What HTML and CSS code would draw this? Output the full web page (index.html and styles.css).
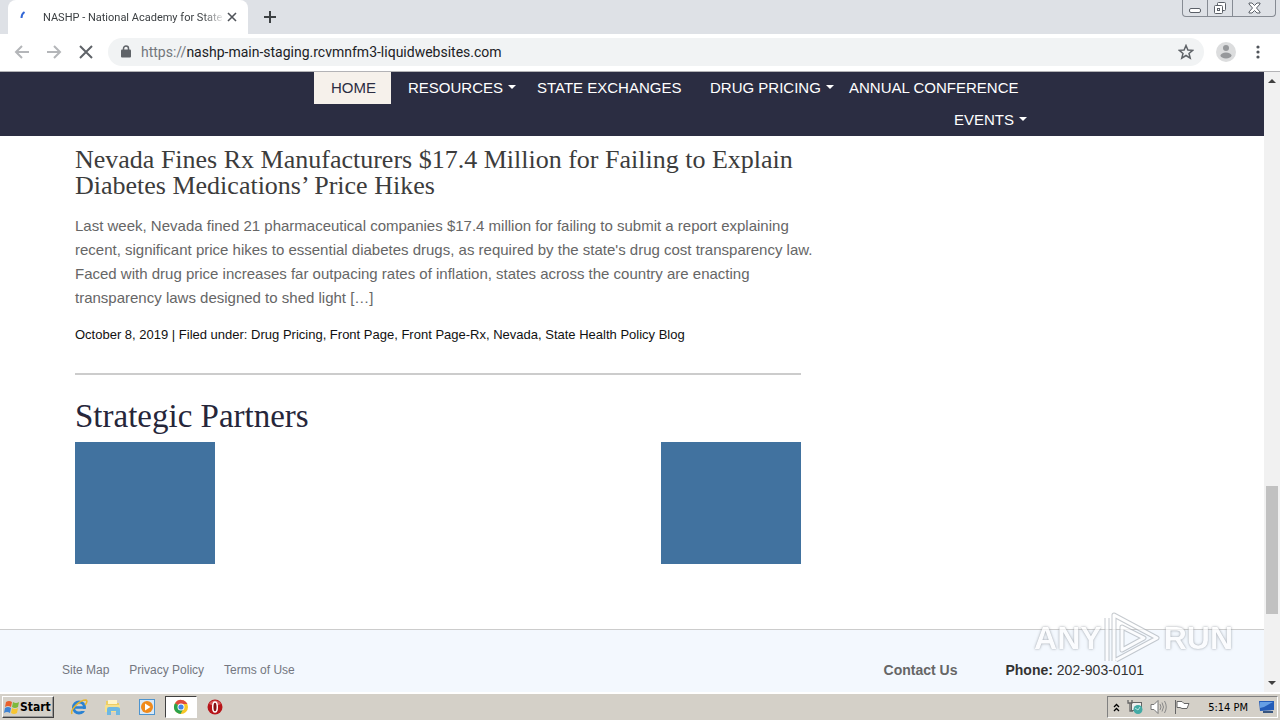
FILE: index.html
```html
<!DOCTYPE html>
<html lang="en">
<head>
<meta charset="utf-8">
<title>NASHP - National Academy for State Health Policy</title>
<link rel="stylesheet" href="styles.css">
</head>
<body>
<header class="browser">
  <div class="tabstrip">
    <div class="tab">
      <svg class="spinner" width="16" height="16" viewBox="0 0 16 16"><path d="M2.500 9Q2.500 5 5.500 3" fill="none" stroke="#3367d6" stroke-width="2"/></svg>
      <span class="tab-title">NASHP - National Academy for State</span>
      <button class="icon-btn" aria-label="Close tab"><svg width="10" height="10" viewBox="0 0 10 10"><path d="M1 1L9 9M9 1L1 9" stroke="#50545a" stroke-width="1.600"/></svg></button>
    </div>
    <button class="icon-btn new-tab" aria-label="New tab"><svg width="12" height="12" viewBox="0 0 12 12"><path d="M6 0V12M0 6H12" stroke="#3c4043" stroke-width="2"/></svg></button>
    <div class="window-controls">
      <button aria-label="Minimize"><svg width="12" height="10" viewBox="0 0 12 10"><rect x=".5" y="5.500" width="11" height="4" rx="1.500" fill="#fff" stroke="#5b6068"/></svg></button>
      <button aria-label="Restore"><svg width="14" height="14" viewBox="0 0 14 14"><rect x="4.500" y="1.500" width="8" height="8" rx="1" fill="#fff" stroke="#5b6068"/><rect x="1.500" y="4.500" width="8" height="8" rx="1" fill="#fff" stroke="#5b6068"/><rect x="4.500" y="7.500" width="2" height="2" fill="none" stroke="#5b6068"/></svg></button>
      <button class="wide" aria-label="Close"><svg width="13" height="12" viewBox="0 0 13 12"><path d="M1 1H4L6.500 3.500L9 1H12V2L8.500 6L12 10V11H9L6.500 8.500L4 11H1V10L4.500 6L1 2Z" fill="#fff" stroke="#5b6068"/></svg></button>
    </div>
  </div>
  <div class="toolbar">
    <button class="icon-btn" aria-label="Back"><svg width="16" height="16" viewBox="0 0 16 16"><path d="M15 8H2M8 2L2 8L8 14" fill="none" stroke="#b4b6b9" stroke-width="2"/></svg></button>
    <button class="icon-btn" aria-label="Forward"><svg width="16" height="16" viewBox="0 0 16 16"><path d="M1 8H14M8 2L14 8L8 14" fill="none" stroke="#b4b6b9" stroke-width="2"/></svg></button>
    <button class="icon-btn" aria-label="Stop loading"><svg width="16" height="16" viewBox="0 0 16 16"><path d="M2 2L14 14M14 2L2 14" stroke="#5f6368" stroke-width="2"/></svg></button>
    <div class="omnibox">
      <svg class="lock" width="10" height="13" viewBox="0 0 10 13"><rect y="4.500" width="10" height="8" rx="1" fill="#5f6368"/><path d="M2.500 5V3.500a2.500 2.500 0 0 1 5 0V5" fill="none" stroke="#5f6368" stroke-width="1.500"/></svg>
      <label class="scheme" for="url">https://</label>
      <input class="url" id="url" type="text" value="nashp-main-staging.rcvmnfm3-liquidwebsites.com">
      <button class="icon-btn" aria-label="Bookmark"><svg width="16" height="16" viewBox="0 0 16 16"><path d="M8 1.500L9.900 6L14.700 6.300L11 9.400L12.200 14.100L8 11.500L3.800 14.100L5 9.400L1.300 6.300L6.100 6Z" fill="none" stroke="#5f6368" stroke-width="1.500"/></svg></button>
    </div>
    <button class="icon-btn profile" aria-label="Profile"><svg width="20" height="20" viewBox="0 0 20 20"><circle cx="10" cy="10" r="10" fill="#dcddde"/><circle cx="10" cy="6" r="3" fill="#96989b"/><ellipse cx="10" cy="13.500" rx="5.500" ry="3" fill="#96989b"/></svg></button>
    <button class="icon-btn" aria-label="Menu"><svg width="4" height="14" viewBox="0 0 4 14" fill="#50545a"><circle cx="2" cy="2" r="1.600"/><circle cx="2" cy="7" r="1.600"/><circle cx="2" cy="12" r="1.600"/></svg></button>
  </div>
</header>

<div class="viewport">
  <div class="page">
    <nav class="site-nav">
      <a class="active" href="#">HOME</a>
      <a href="#">RESOURCES<i class="caret"></i></a>
      <a href="#">STATE EXCHANGES</a>
      <a href="#">DRUG PRICING<i class="caret"></i></a>
      <a href="#">ANNUAL CONFERENCE</a>
      <a class="events" href="#">EVENTS<i class="caret"></i></a>
    </nav>
    <main class="content">
      <article class="post">
        <h2>Nevada Fines Rx Manufacturers $17.4 Million for Failing to Explain Diabetes Medications’ Price Hikes</h2>
        <p class="excerpt">Last week, Nevada fined 21 pharmaceutical companies $17.4 million for failing to submit a report explaining<br>recent, significant price hikes to essential diabetes drugs, as required by the state's drug cost transparency law.<br>Faced with drug price increases far outpacing rates of inflation, states across the country are enacting<br>transparency laws designed to shed light […]</p>
        <p class="meta">October 8, 2019 | Filed under: <a href="#">Drug Pricing</a>, <a href="#">Front Page</a>, <a href="#">Front Page-Rx</a>, <a href="#">Nevada</a>, <a href="#">State Health Policy Blog</a></p>
      </article>
      <section class="partners">
        <h1>Strategic Partners</h1>
        <div class="partner-row">
          <div class="partner"></div>
          <div class="partner"></div>
        </div>
      </section>
    </main>
    <footer class="site-footer">
      <div class="footer-links">
        <a href="#">Site Map</a>
        <a href="#">Privacy Policy</a>
        <a href="#">Terms of Use</a>
      </div>
      <div class="contact">
        <a href="#">Contact Us</a>
        <span><b>Phone:</b> 202-903-0101</span>
      </div>
    </footer>
  </div>
  <div class="scrollbar">
    <svg width="8" height="4" viewBox="0 0 8 4"><path d="M0 4L4 0L8 4Z" fill="#404040"/></svg>
    <div class="track"><div class="thumb"></div></div>
    <svg width="8" height="4" viewBox="0 0 8 4"><path d="M0 0L4 4L8 0Z" fill="#404040"/></svg>
  </div>
  <div class="watermark">
    <span>ANY</span>
    <svg width="58" height="56" viewBox="0 0 58 56" fill="none" stroke-linejoin="round"><path d="M3 51V8M10 51V5L53 28L12 50M18 40V17L40 28Z" stroke="#aeb4bb" stroke-width="5"/><path d="M3 51V8M10 51V5L53 28L12 50M18 40V17L40 28Z" stroke="#fff" stroke-width="3"/></svg>
    <span>RUN</span>
  </div>
</div>

<footer class="taskbar">
  <button class="start"><svg width="16" height="16" viewBox="0 0 16 16"><path d="M2 3Q5 1 8 3L7 8Q4 6 1 8Z" fill="#e8602c"/><path d="M9 3Q12 5 15 3L14 8Q11 10 8 8Z" fill="#7db93c"/><path d="M1 9Q4 7 7 9L6 14Q3 12 0 14Z" fill="#3f83d3"/><path d="M8 9Q11 11 14 9L13 14Q10 16 7 14Z" fill="#f7c531"/></svg>Start</button>
  <div class="launchers">
    <button aria-label="Internet Explorer"><svg width="18" height="18" viewBox="0 0 18 18"><circle cx="9" cy="9.500" r="5.500" fill="none" stroke="#2a82d2" stroke-width="3"/><path d="M4 9.500H14" stroke="#2a82d2" stroke-width="2.500"/><path d="M11 12H17" stroke="#d4d0c8" stroke-width="2"/><path d="M2 16C0 12 9 2 16 2C18 3 16 6 15 7" fill="none" stroke="#e7b52c" stroke-width="1.500"/></svg></button>
    <button aria-label="Explorer"><svg width="18" height="18" viewBox="0 0 18 18"><path d="M2 3H7L9 5H15V14H2Z" fill="#edce63"/><path d="M4 2H13V6H4Z" fill="#fff5c9"/><path d="M1 7H16V14H1Z" fill="#f6e18d"/><path d="M3 17V11Q3 9 5 9H13Q16 9 16 11V17H12V13H7V17Z" fill="#6eb8e2"/></svg></button>
    <button aria-label="Media Player"><svg width="18" height="18" viewBox="0 0 18 18"><rect x="1.500" y="1.500" width="15" height="15" fill="#d8e9f8" stroke="#4d94cf"/><circle cx="9" cy="9" r="6" fill="#f08a1b"/><path d="M7 5.500L12.500 9L7 12.500Z" fill="#fff"/></svg></button>
    <button class="pressed" aria-label="Chrome"><svg width="16" height="16" viewBox="0 0 16 16"><circle cx="8" cy="8" r="7" fill="#f8c727"/><path d="M8 8L2 4.300A7 7 0 0 1 14.400 5H8Z" fill="#df4b3d"/><path d="M8 8L2 4.300A7 7 0 0 0 7.500 15L10.500 9.500Z" fill="#2ba24c"/><circle cx="8" cy="8" r="3.500" fill="#fff"/><circle cx="8" cy="8" r="2.600" fill="#4285e8"/></svg></button>
    <button aria-label="Opera"><svg width="16" height="16" viewBox="0 0 16 16"><circle cx="8" cy="8" r="7.500" fill="#b71419"/><path d="M2 5A7 7 0 0 1 14 5Q8 8 2 5Z" fill="#d9575a"/><ellipse cx="8" cy="8" rx="2.300" ry="5" fill="#851014" stroke="#fff" stroke-width="1.500"/></svg></button>
  </div>
  <div class="tray">
    <svg width="7" height="9" viewBox="0 0 7 9"><path d="M1 4L3.500 1.500L6 4M1 8L3.500 5.500L6 8" fill="none" stroke="#000" stroke-width="1.300"/></svg>
    <svg width="16" height="16" viewBox="0 0 16 16"><rect x="4.500" y="3.500" width="10" height="8" fill="#eee" stroke="#646464"/><path d="M1 1V4H5V1M3 4V12H6" fill="none" stroke="#666" stroke-width="1.300"/><circle cx="11" cy="10.500" r="4.500" fill="#43aaa5"/><path d="M8 9L11 11L13 8" stroke="#b7e3df" fill="none"/></svg>
    <svg width="17" height="16" viewBox="0 0 17 16"><path d="M1 5.500H4L8 1.500V14.500L4 10.500H1Z" fill="#fff" stroke="#777"/><path d="M10 5Q12 8 10 11M12 3.500Q15 8 12 12.500M14.500 2Q18 8 14.500 14" fill="none" stroke="#888"/></svg>
    <svg width="17" height="16" viewBox="0 0 17 16"><path d="M1.500 1V15M3 2.500H8L10 4.500H15L13 9.500H8L6 8.500H3Z" fill="#fff" stroke="#666"/></svg>
    <time>5:14 PM</time>
    <svg width="16" height="14" viewBox="0 0 16 14"><path d="M0 1H15V10L1 11Z" fill="#235cb8"/><path d="M1 2H14L5 7L1 8Z" fill="#659fe5"/><path d="M4 12H14" stroke="#38557f" stroke-width="2"/></svg>
  </div>
</footer>
</body>
</html>
```
FILE: styles.css
```css
* { box-sizing: border-box; }

body {
  display: flex;
  flex-direction: column;
  min-height: 100vh;
  margin: 0;
  background: #fff;
  font-family: "Liberation Sans", Arial, sans-serif;
}

a { color: inherit; text-decoration: none; }
h1, h2, p { margin: 0; font-weight: 400; }
svg { display: block; flex: none; }
button { font: inherit; }

.icon-btn {
  display: flex;
  align-items: center;
  justify-content: center;
  flex: none;
  padding: 0;
  border: 0;
  background: none;
}

/* Browser frame */
.browser {
  border-bottom: 1px solid #b3b3b6;
  font-family: Roboto, sans-serif;
}
.tabstrip {
  display: flex;
  height: 34px;
  padding-left: 8px;
  background: #dee1e6;
}
.tab {
  display: flex;
  align-items: center;
  width: 240px;
  padding: 0 11px;
  border-radius: 8px 8px 0 0;
  background: #fff;
}
.tab-title {
  flex: 1;
  margin: 0 2px 0 8px;
  color: #3c4043;
  font-size: 11px;
  white-space: nowrap;
  mask-image: linear-gradient(to right, #000 88%, transparent);
}
.new-tab { width: 44px; }
.window-controls {
  display: flex;
  height: 17px;
  margin: 0 4px 0 auto;
  border: 1px solid #868b93;
  border-top: 0;
  border-radius: 0 0 4px 4px;
}
.window-controls button {
  display: flex;
  align-items: center;
  justify-content: center;
  width: 25px;
  padding: 0;
  border: 0;
  border-right: 1px solid #868b93;
  background: none;
}
.window-controls .wide { width: 42px; border-right: 0; }

.toolbar {
  display: flex;
  align-items: center;
  gap: 16px;
  height: 37px;
  padding: 0 20px 2px 14px;
  background: #fff;
}
.omnibox {
  display: flex;
  align-items: center;
  flex: 1;
  height: 28px;
  margin: 0 -4px 0 -2px;
  padding: 0 10px 0 13px;
  border-radius: 14px;
  background: #f1f3f4;
  font-size: 14px;
}
.profile { margin-right: 4px; }
.lock { margin-right: 10px; }
.scheme { color: #73777c; }
.url {
  flex: 1;
  min-width: 0;
  padding: 0;
  border: 0;
  background: none;
  color: #202124;
  font: inherit;
}

/* Page */
.viewport {
  position: relative;
  display: flex;
  flex: 1;
}
.page {
  display: flex;
  flex-direction: column;
  flex: 1;
  min-width: 0;
}
.site-nav {
  display: grid;
  grid-template-columns: 77px 129px 173px 139px 199px;
  grid-auto-rows: 32px;
  justify-content: end;
  padding-right: 233px;
  background: #2b2d42;
  color: #fff;
  font-size: 15px;
}
.site-nav a {
  display: flex;
  align-items: center;
  padding: 0 0 2px 17px;
  white-space: nowrap;
}
.site-nav .active { background: #f6f1eb; color: #2b2d42; }
.site-nav .events { grid-column: 5; justify-content: flex-end; padding-right: 4px; }
.caret {
  margin-left: 5px;
  border: 4px solid transparent;
  border-top-color: currentColor;
  border-bottom: 0;
}

.content {
  width: 100%;
  max-width: 801px;
  padding: 11px 0 65px 75px;
}
.post { padding-bottom: 28px; border-bottom: 2px solid #ccc; }
.post h2 {
  color: #3c3c3c;
  font-family: Georgia, "Liberation Serif", serif;
  font-size: 26px;
  line-height: 26px;
}
.excerpt {
  margin: 15px 0;
  color: #666;
  font-size: 15px;
  line-height: 24px;
  white-space: nowrap;
}
.meta { color: #111; font-size: 13px; line-height: 20px; }
.partners { padding-top: 24px; }
.partners h1 {
  margin-bottom: 9px;
  color: #26263a;
  font-family: Georgia, "Liberation Serif", serif;
  font-size: 33px;
  line-height: 34px;
}
.partner-row { display: flex; justify-content: space-between; }
.partner { width: 140px; height: 122px; background: #41729f; }

.site-footer {
  display: flex;
  align-items: center;
  justify-content: space-between;
  flex: 1;
  padding: 18px 120px 0 62px;
  border-top: 1px solid #ccc;
  background: #f3f8fe;
}
.footer-links { display: flex; gap: 20px; color: #737780; font-size: 12px; }
.contact { display: flex; gap: 48px; color: #333; font-size: 14px; }
.contact a { color: #666; font-weight: 700; }

.scrollbar {
  display: flex;
  flex-direction: column;
  align-items: center;
  width: 16px;
  padding: 7px 0;
  background: #f1f1f1;
}
.track { display: flex; flex-direction: column; justify-content: flex-end; flex: 1; }
.thumb { width: 12px; height: 128px; margin-bottom: 67px; background: #c1c1c1; }

.watermark {
  position: absolute;
  right: 47px;
  bottom: 26px;
  display: flex;
  align-items: center;
  gap: 2px;
  opacity: 0.7;
  color: #fff;
  font-size: 32px;
  font-weight: 700;
  text-shadow: 0 0 3px #8a9098, 0 0 1px #8a9098;
}

/* Taskbar */
.taskbar {
  display: flex;
  align-items: center;
  height: 28px;
  padding: 0 2px;
  border-top: 2px solid #fff;
  background: #d4d0c8;
  font-family: "DejaVu Sans Condensed", "DejaVu Sans", sans-serif;
}
.start {
  display: flex;
  align-items: center;
  height: 22px;
  padding: 0 2px 0 1px;
  border: 1px solid;
  border-color: #fff #404040 #404040 #fff;
  background: #d4d0c8;
  box-shadow: inset -1px -1px #999;
  color: #000;
  font-size: 12px;
  font-weight: 700;
}
.launchers { display: flex; gap: 2px; margin-left: 9px; }
.launchers button {
  display: flex;
  align-items: center;
  justify-content: center;
  width: 32px;
  height: 22px;
  padding: 0;
  border: 1px solid transparent;
  background: none;
}
.launchers .pressed { border-color: #404040 #fff #fff #404040; background: #fff; }
.tray {
  display: flex;
  align-items: center;
  gap: 7px;
  height: 22px;
  margin-left: auto;
  padding: 0 2px 0 5px;
  border: 1px solid;
  border-color: #808080 #fff #fff #808080;
  font-size: 11px;
}
.tray time { margin: 0 4px 0 10px; }
```
